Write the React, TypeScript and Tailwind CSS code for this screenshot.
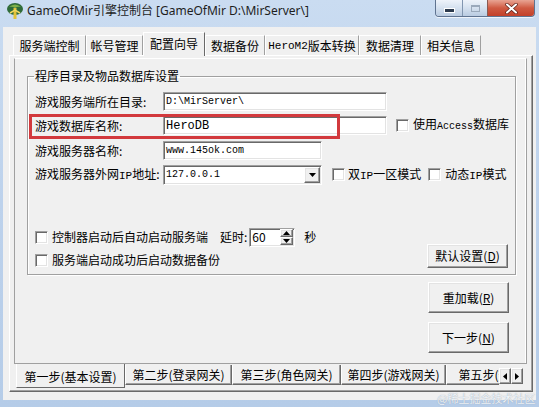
import React from 'react';

const sunken =
  'border border-t-[#a0a0a0] border-l-[#a0a0a0] border-b-white border-r-white shadow-[inset_1px_1px_0_#696969,inset_-1px_-1px_0_#e3e3e3]';
const raised =
  'border border-t-white border-l-white border-b-[#696969] border-r-[#696969] shadow-[inset_-1px_-1px_0_#a0a0a0,inset_1px_1px_0_#e3e3e3]';

function M({ children, className = '' }: { children: React.ReactNode; className?: string }) {
  return <span className={`font-['Liberation_Mono',monospace] text-[10px] ${className}`}>{children}</span>;
}

function Check() {
  return <span className={`inline-block w-[13px] h-[13px] shrink-0 bg-white ${sunken}`} />;
}

function AppIcon() {
  return (
    <svg width="18" height="18" viewBox="0 0 18 18">
      <ellipse cx="9" cy="7" rx="8" ry="6" fill="#2f6b3a" />
      <path d="M3 5 Q9 0 15 5 Q12 4 9 6 Q6 4 3 5Z" fill="#7fb04a" />
      <rect x="7.5" y="6" width="3" height="11" fill="#e2c23a" />
      <path d="M4 11 L9 8 L14 11" stroke="#f2d860" strokeWidth="1.5" fill="none" />
    </svg>
  );
}

function WinButtons() {
  return (
    <div className="flex h-[17px] rounded-b-[4px] overflow-hidden border border-t-0 border-[#5f7390] shadow-[0_1px_0_rgba(255,255,255,0.7)]">
      <div className="w-[27px] h-full bg-gradient-to-b from-[#eef3fa] via-[#d5e1ef] to-[#b9cbe1] border-r border-[#8296b0] flex items-center justify-center">
        <span className="block w-[9px] h-[3px] bg-[#2c3a4d] mt-[4px] shadow-[0_0_0_1px_#fff]" />
      </div>
      <div className="w-[25px] h-full bg-gradient-to-b from-[#eef3fa] via-[#d5e1ef] to-[#b9cbe1] border-r border-[#8a5a52] flex items-center justify-center">
        <span className="block w-[9px] h-[7px] border border-[#9aa9bb] border-t-2" />
      </div>
      <div className="w-[46px] h-full bg-gradient-to-b from-[#e8a493] via-[#cf5a42] to-[#c2402a] flex items-center justify-center">
        <svg width="13" height="11" viewBox="0 0 13 11">
          <path d="M2 1.5 L11 9.5 M11 1.5 L2 9.5" stroke="#5a2018" strokeWidth="3.4" strokeLinecap="round" />
          <path d="M2 1.5 L11 9.5 M11 1.5 L2 9.5" stroke="#fff" strokeWidth="2" strokeLinecap="round" />
        </svg>
      </div>
    </div>
  );
}

const topTabs: { label: React.ReactNode; w: number; active?: boolean }[] = [
  { label: '服务端控制', w: 73 },
  { label: '帐号管理', w: 57 },
  { label: '配置向导', w: 62, active: true },
  { label: '数据备份', w: 60 },
  { label: <><M className="text-[11px]">HeroM2</M>版本转换</>, w: 94 },
  { label: '数据清理', w: 62 },
  { label: '相关信息', w: 60 },
];

const bottomTabs: { label: string; w: number; active?: boolean }[] = [
  { label: '第一步(基本设置)', w: 109, active: true },
  { label: '第二步(登录网关)', w: 107 },
  { label: '第三步(角色网关)', w: 109 },
  { label: '第四步(游戏网关)', w: 105 },
  { label: '第五步(数据库)', w: 105 },
];

function Tri({ dir }: { dir: 'up' | 'down' | 'left' | 'right' }) {
  const d = {
    up: 'M0 4 L3.5 0 L7 4Z',
    down: 'M0 0 L7 0 L3.5 4Z',
    left: 'M4 0 L4 7 L0 3.5Z',
    right: 'M0 0 L4 3.5 L0 7Z',
  }[dir];
  const horiz = dir === 'left' || dir === 'right';
  return (
    <svg width={horiz ? 4 : 7} height={horiz ? 7 : 4} viewBox={horiz ? '0 0 4 7' : '0 0 7 4'}>
      <path d={d} fill="#000" />
    </svg>
  );
}

function Btn({ children, h }: { children: React.ReactNode; h: number }) {
  return (
    <div
      className={`w-[81px] flex items-center justify-center whitespace-nowrap bg-[#f0f0f0] ${raised}`}
      style={{ height: h }}
    >
      {children}
    </div>
  );
}

export default function App() {
  return (
    <div className="relative w-[539px] h-[407px] overflow-hidden bg-gradient-to-b from-[#cadcf1] via-[#bdd2ec] to-[#b5cce8] text-[12px] text-black font-['Noto_Sans_CJK_SC','Noto_Sans',sans-serif]">
      {/* title bar */}
      <div className="flex items-start h-[27px]">
        <div className="ml-[6px] mt-[2px]">
          <AppIcon />
        </div>
        <div className="ml-[3px] mt-[3px] text-[12px] leading-[16px] whitespace-nowrap font-['Noto_Sans','Noto_Sans_CJK_SC',sans-serif] text-[#1e1e1e]">
          {'GameOfMir引擎控制台 [GameOfMir D:\\MirServer\\]'}
        </div>
        <div className="ml-auto mr-[4px]">
          <WinButtons />
        </div>
      </div>

      {/* client */}
      <div className="ml-[3px] w-[533px] h-[373px] bg-[#f0f0f0]">
        <div className="flex items-end h-[28px] pl-[10px]">
          {topTabs.map((t, i) => (
            <div
              key={i}
              className={`flex items-center justify-center leading-[16px] whitespace-nowrap border-t border-l border-white border-r ${
                t.active
                  ? 'relative z-10 h-[24px] -mb-px bg-[#f0f0f0] border-r-[#696969] pb-[2px]'
                  : 'h-[20px] border-r-[#a0a0a0]'
              }`}
              style={{ width: t.w }}
            >
              {t.label}
            </div>
          ))}
        </div>

        {/* page panel */}
        <div className="ml-[6px] w-[524px] h-[337px] border border-t-white border-l-white border-r-[#696969] border-b-[#696969] shadow-[inset_-1px_-1px_0_#a0a0a0]">
          <div className="ml-[4px] mt-[2px] w-[513px] h-[306px] border border-t-white border-l-[#a0a0a0] border-r-[#a0a0a0] border-b-[#a0a0a0] shadow-[inset_-1px_0_0_#fff]">
            <fieldset className="ml-[12px] mt-[10px] w-[488px] px-[6px] pb-[6px] border border-[#a0a0a0] shadow-[inset_1px_1px_0_#fff,1px_1px_0_#fff]">
              <legend className="px-[1px] leading-[14px]">程序目录及物品数据库设置</legend>

              <div className="pl-[1px] mt-[9px] flex flex-col gap-[5px] whitespace-nowrap">
                <div className="flex items-center h-[19px]">
                  <div className="w-[128px] leading-[16px]">游戏服务端所在目录:</div>
                  <div className={`w-[224px] h-[19px] bg-white pl-[2px] flex items-center ${sunken}`}>
                    <M>{'D:\\MirServer\\'}</M>
                  </div>
                </div>
                <div className="flex items-center h-[19px]">
                  <div className="w-[128px] leading-[16px]">游戏数据库名称:</div>
                  <div className={`w-[224px] h-[19px] bg-white pl-[2px] flex items-center ${sunken}`}>
                    <M className="text-[12px]">HeroDB</M>
                  </div>
                  <div className="ml-[9px] flex items-center gap-[4px]">
                    <Check />
                    <span className="leading-[16px]">
                      使用<M>Access</M>数据库
                    </span>
                  </div>
                </div>
                <div className="flex items-center h-[19px] mt-[1px]">
                  <div className="w-[128px] leading-[16px]">游戏服务器名称:</div>
                  <div className={`w-[159px] h-[19px] bg-white pl-[2px] flex items-center ${sunken}`}>
                    <M>www.145ok.com</M>
                  </div>
                </div>
                <div className="flex items-center h-[19px]">
                  <div className="w-[128px] leading-[16px]">
                    游戏服务器外网<M className="text-[11px]">IP</M>地址:
                  </div>
                  <div className={`w-[159px] h-[20px] bg-white pl-[2px] pr-[1px] flex items-center ${sunken}`}>
                    <M className="flex-1">127.0.0.1</M>
                    <div className={`w-[16px] h-[16px] bg-[#f0f0f0] flex items-center justify-center ${raised}`}>
                      <Tri dir="down" />
                    </div>
                  </div>
                  <div className="ml-[10px] flex items-center gap-[3px]">
                    <Check />
                    <span className="leading-[16px]">
                      双<M className="text-[11px]">IP</M>一区模式
                    </span>
                  </div>
                  <div className="ml-[7px] flex items-center gap-[4px]">
                    <Check />
                    <span className="leading-[16px]">
                      动态<M className="text-[11px]">IP</M>模式
                    </span>
                  </div>
                </div>
              </div>

              <div className="mt-[43px] pl-[1px] flex items-end justify-between whitespace-nowrap">
                <div className="flex flex-col gap-[5px]">
                  <div className="flex items-center h-[20px]">
                    <Check />
                    <span className="ml-[4px] leading-[16px]">控制器启动后自动启动服务端</span>
                    <span className="ml-[12px] leading-[16px]">延时:</span>
                    <div className={`ml-[2px] w-[46px] h-[19px] bg-white pl-[2px] pr-[1px] flex items-center ${sunken}`}>
                      <span className="flex-1 leading-[14px]">60</span>
                      <div className="flex flex-col">
                        <div className={`w-[13px] h-[8px] bg-[#f0f0f0] flex items-center justify-center ${raised}`}>
                          <Tri dir="up" />
                        </div>
                        <div className={`w-[13px] h-[8px] bg-[#f0f0f0] flex items-center justify-center ${raised}`}>
                          <Tri dir="down" />
                        </div>
                      </div>
                    </div>
                    <span className="ml-[9px] leading-[16px]">秒</span>
                  </div>
                  <div className="flex items-center h-[16px]">
                    <Check />
                    <span className="ml-[4px] leading-[16px]">服务端启动成功后启动数据备份</span>
                  </div>
                </div>
                <div className="mr-[1px]">
                  <Btn h={24}>
                    默认设置(<span className="underline">D</span>)
                  </Btn>
                </div>
              </div>
            </fieldset>

            <div className="mt-[7px] pr-[17px] flex flex-col items-end gap-[9px]">
              <Btn h={31}>
                重加载(<span className="underline">R</span>)
              </Btn>
              <Btn h={31}>
                下一步(<span className="underline">N</span>)
              </Btn>
            </div>
          </div>

          {/* bottom tabs */}
          <div className="flex items-start pl-[6px] h-[25px]">
            <div className="flex items-start w-[483px] overflow-hidden">
              {bottomTabs.map((t, i) => (
                <div
                  key={i}
                  className={`shrink-0 flex items-center justify-center whitespace-nowrap leading-[16px] border-l border-b border-r border-l-white ${
                    t.active
                      ? 'relative z-10 -mt-px h-[25px] bg-[#f0f0f0] border-b-[#696969] border-r-[#696969] pt-[3px]'
                      : 'h-[20px] mt-[1px] border-b-[#696969] border-r-[#696969] shadow-[inset_-1px_-1px_0_#a0a0a0]'
                  }`}
                  style={{ width: t.w }}
                >
                  {t.label}
                </div>
              ))}
            </div>
            <div className="flex mt-[4px]">
              <div className={`w-[12px] h-[16px] bg-[#f0f0f0] flex items-center justify-center ${raised}`}>
                <Tri dir="left" />
              </div>
              <div className={`w-[12px] h-[16px] bg-[#f0f0f0] flex items-center justify-center ${raised}`}>
                <Tri dir="right" />
              </div>
            </div>
          </div>
        </div>
      </div>

      {/* annotation highlight */}
      <div className="absolute left-[29px] top-[114px] w-[311px] h-[25px] border-[3px] border-[#d2393d]" />

      {/* watermark */}
      <div className="absolute left-[437px] top-[391px] text-[11px] leading-[14px] whitespace-nowrap text-[#eef3f8] [text-shadow:0_0_1px_#8c98a8]">
        @稀土掘金技术社区
      </div>
    </div>
  );
}
